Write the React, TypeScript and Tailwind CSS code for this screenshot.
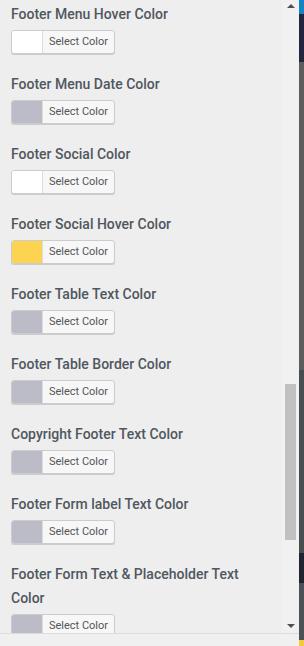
import React from "react";

const ROWS: { label: string; swatch: string }[] = [
  { label: "Footer Menu Hover Color", swatch: "bg-white" },
  { label: "Footer Menu Date Color", swatch: "bg-[#bcbcc9]" },
  { label: "Footer Social Color", swatch: "bg-white" },
  { label: "Footer Social Hover Color", swatch: "bg-[#fdd451]" },
  { label: "Footer Table Text Color", swatch: "bg-[#bcbcc9]" },
  { label: "Footer Table Border Color", swatch: "bg-[#bcbcc9]" },
  { label: "Copyright Footer Text Color", swatch: "bg-[#bcbcc9]" },
  { label: "Footer Form label Text Color", swatch: "bg-[#bcbcc9]" },
  { label: "Footer Form Text & Placeholder Text Color", swatch: "bg-[#bcbcc9]" },
];

function ColorControl({ label, swatch }: { label: string; swatch: string }) {
  return (
    <div className="mb-[18px]">
      <div className="text-[14px] font-medium leading-[24px] text-[#50575e] pr-[10px]">
        {label}
      </div>
      <button
        type="button"
        className="mt-[4px] flex h-[24px] w-[104px] overflow-hidden rounded-[3px] border border-[#ccc] bg-[#f7f7f7] shadow-[0_1px_0_#ccc]"
      >
        <span className={`h-full w-[31px] shrink-0 border-r border-[#ddd] ${swatch}`} />
        <span className="flex-1 text-center text-[11px] leading-[21px] text-[#555]">
          Select Color
        </span>
      </button>
    </div>
  );
}

export default function App() {
  return (
    <div
      className="flex h-[646px] w-[304px] overflow-hidden bg-[#eee]"
      style={{ fontFamily: "Roboto, 'Noto Sans', sans-serif" }}
    >
      <div className="flex w-[299px] flex-col">
        <div className="flex min-h-0 flex-1">
          <div className="min-w-0 flex-1 overflow-hidden pl-[11px] pt-[2px]">
            {ROWS.map((r) => (
              <ColorControl key={r.label} label={r.label} swatch={r.swatch} />
            ))}
          </div>
          {/* scrollbar */}
          <div className="flex w-[17px] flex-col items-center bg-[#f1f1f1]">
            <div className="mt-[4px] h-0 w-0 border-x-[4px] border-b-[4px] border-x-transparent border-b-[#505050]" />
            <div className="mt-[376px] h-[156px] w-[11px] bg-[#c1c1c1]" />
            <div className="flex-1" />
            <div className="mb-[5px] h-0 w-0 border-x-[4px] border-t-[4px] border-x-transparent border-t-[#505050]" />
          </div>
        </div>
        <div className="h-[13px] border-t border-[#dcdcdc] bg-[#f0f0f0]" />
      </div>
      {/* page behind */}
      <div className="flex w-[5px] flex-col">
        <div className="h-[14px] bg-[#1284c4]" />
        <div className="h-[48px] bg-[#24243e]" />
        <div className="h-[308px] bg-[#5b5c5d]" />
        <div className="h-[183px] bg-[#4a4d50]" />
        <div className="h-[30px] bg-[#1f2431]" />
        <div className="flex-1 bg-[#4d5155]" />
        <div className="h-[6px] bg-[#f7c93c]" />
      </div>
    </div>
  );
}
